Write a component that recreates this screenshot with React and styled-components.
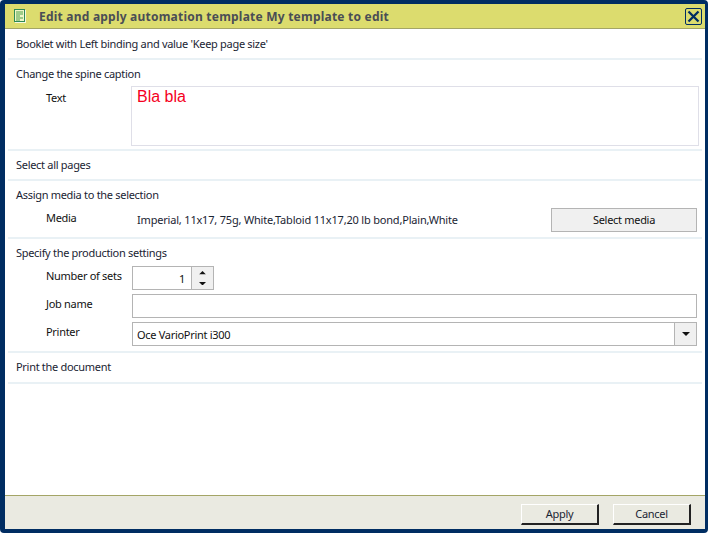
import React from "react";
import styled, { createGlobalStyle } from "styled-components";

const Global = createGlobalStyle`
  html, body { margin: 0; padding: 0; background: #fff; }
  * { box-sizing: border-box; }
`;
const Windowed = styled.div`
  width: 708px; height: 533px; display: flex; flex-direction: column;
  border-style: solid; border-color: #002d62; border-width: 4px 3px 4px 5px;
  border-radius: 4px; background: #fff;
  font-family: "Noto Sans", sans-serif; font-size: 11px; letter-spacing: -0.3px; color: #1a2433;
  overflow: hidden;
`;
const TitleBar = styled.div`
  height: 25px; flex: none; display: flex; align-items: center; background: #dcdc6e;
  border-bottom: 1px solid #a4a566; padding: 0 3px 0 9px;
`;
const Title = styled.div`
  font-weight: 700; font-size: 12px; letter-spacing: 0.22px; color: #4a4d55; margin-left: 13px; flex: 1; white-space: nowrap;
`;
const Content = styled.div` flex: 1; padding: 0 3px; min-height: 0; `;
const Section = styled.div`
  height: ${p => p.$h}px; border-bottom: 2px solid #e9f1f5; padding: ${p => p.$pad}px 0 0 8px;
`;
const Heading = styled.div` height: 16px; line-height: 16px; white-space: nowrap; `;
const Row = styled.div`
  display: flex; align-items: flex-start; margin-top: ${p => p.$gap}px;
`;
const Label = styled.div`
  width: 116px; flex: none; padding: ${p => p.$top ?? 2}px 0 0 30px;
  color: #111; white-space: nowrap; line-height: 16px;
`;
const TextArea = styled.div`
  width: 568px; height: 60px; margin-left: -1px; border: 1px solid #dfdfe8; padding: 1px 5px;
  font-family: "Liberation Sans", sans-serif; font-size: 16px; letter-spacing: 0; color: #f5001e; line-height: 18px;
`;
const Footer = styled.div`
  height: 34px; flex: none; background: #eaeae1; border-top: 1px solid #a4a566;
  display: flex; justify-content: flex-end; gap: 14px; padding: 8px 14px 0 0;
`;
const DialogButton = styled.div`
  width: 78px; height: 21px; display: flex; align-items: center; justify-content: center;
  background: #eaeae1; color: #1a2433; padding-bottom: 1px;
  border-style: solid; border-width: 1px 2px 2px 1px; border-color: #fff #222 #222 #fff;
`;
const MediaValue = styled.div`
  width: 419px; flex: none; padding: 4px 0 0 5px; line-height: 16px; letter-spacing: -0.19px; color: #1a2433; white-space: nowrap;
`;
const FlatButton = styled.div`
  width: 146px; height: 24px; border: 1px solid #b4b4b4; background: #f0f0f0; padding-bottom: 1px;
  display: flex; align-items: center; justify-content: center; color: #111;
`;
const Field = styled.div`
  display: flex; width: ${p => p.$w}px; height: 24px; border: 1px solid #b4b4b4; background: #fff;
`;
const FieldText = styled.div`
  flex: 1; line-height: 24px; text-align: ${p => p.$right ? "right" : "left"};
  padding: 0 ${p => p.$right ? 6 : 4}px 0 4px; color: #111;
`;
const Spin = styled.div`
  width: 22px; flex: none; background: #f0f0f0; border-left: 1px solid #b4b4b4;
  display: flex; flex-direction: column; align-items: center; justify-content: center;
`;
const SpinPart = styled.div`
  height: 11px; display: flex; align-items: center; justify-content: center;
`;
const Arrow = ({ up, w = 7 }) => (
  <svg width={w} height={w / 2} viewBox="0 0 6 3" style={{ transform: up ? "rotate(180deg)" : undefined }}>
    <path d="M0 0h6L3 3z" fill="#111" />
  </svg>
);

export default function App() {
  return (
    <Windowed>
      <Global />
      <TitleBar>
        <svg width="12" height="14" viewBox="0 0 12 14">
          <rect x="11" y="1" width="1" height="13" fill="#f4f8e0" />
          <rect x="1" y="13" width="11" height="1" fill="#f4f8e0" />
          <rect x="0.5" y="0.5" width="10" height="12" fill="#eef6c8" stroke="#2f8a55" />
          <path d="M2 3h7M2 5h7M2 7h4M2 9h7M2 11h4" stroke="#4fa04a" />
        </svg>
        <Title>Edit and apply automation template My template to edit</Title>
        <svg width="17" height="17" viewBox="0 0 17 17">
          <rect x="0.5" y="0.5" width="16" height="16" fill="none" stroke="#002d62" rx="1.5" />
          <path d="M3.5 3.5l10 10M13.5 3.5l-10 10" stroke="#002d62" strokeWidth="2.3" />
        </svg>
      </TitleBar>
      <Content>
        <Section $h={31} $pad={7}><Heading>Booklet with Left binding and value 'Keep page size'</Heading></Section>
        <Section $h={91} $pad={6}>
          <Heading>Change the spine caption</Heading>
          <Row $gap={4}>
            <Label $top={4}>Text</Label>
            <TextArea>Bla bla</TextArea>
          </Row>
        </Section>
        <Section $h={30} $pad={6}><Heading>Select all pages</Heading></Section>
        <Section $h={58} $pad={6}>
          <Heading>Assign media to the selection</Heading>
          <Row $gap={5}>
            <Label>Media</Label>
            <MediaValue>Imperial, 11x17, 75g, White,Tabloid 11x17,20 lb bond,Plain,White</MediaValue>
            <FlatButton>Select media</FlatButton>
          </Row>
        </Section>
        <Section $h={114} $pad={6}>
          <Heading>Specify the production settings</Heading>
          <Row $gap={5}>
            <Label>Number of sets</Label>
            <Field $w={82}>
              <FieldText $right>1</FieldText>
              <Spin><SpinPart><Arrow up /></SpinPart><SpinPart><Arrow /></SpinPart></Spin>
            </Field>
          </Row>
          <Row $gap={4}>
            <Label>Job name</Label>
            <Field $w={565} />
          </Row>
          <Row $gap={4}>
            <Label>Printer</Label>
            <Field $w={565}>
              <FieldText>Oce VarioPrint i300</FieldText>
              <Spin><Arrow w={8} /></Spin>
            </Field>
          </Row>
        </Section>
        <Section $h={31} $pad={6}><Heading>Print the document</Heading></Section>
      </Content>
      <Footer>
        <DialogButton>Apply</DialogButton>
        <DialogButton>Cancel</DialogButton>
      </Footer>
    </Windowed>
  );
}
